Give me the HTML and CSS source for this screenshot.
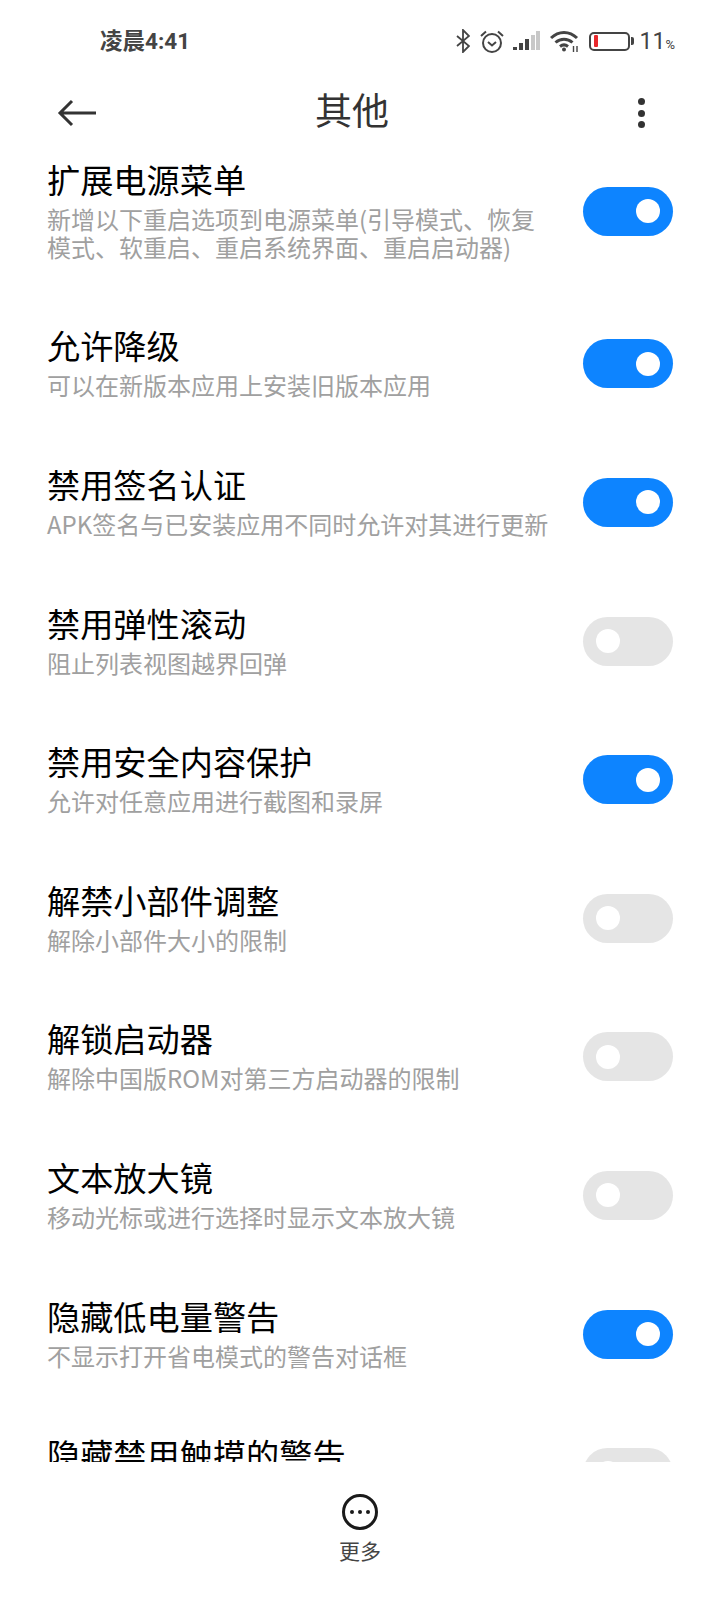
FILE: index.html
```html
<!DOCTYPE html>
<html lang="zh-CN">
<head>
    <meta charset="UTF-8">
    <title>其他</title>
    <link rel="stylesheet" href="styles.css">
</head>
<body>
    <!-- Status bar -->
    <div class="status-bar">
        <div class="status-time">凌晨4:41</div>
        <div class="status-icons">
            <svg class="icon-bt" width="14" height="24" viewBox="0 0 14 24" fill="none" stroke="#444" stroke-width="1.8">
                <path d="M1 7l12 10-6 6V1l6 6L1 17"/>
            </svg>
            <svg class="icon-alarm" width="24" height="23" viewBox="0 0 24 23" fill="none" stroke="#444" stroke-width="2">
                <circle cx="12" cy="13" r="9"/>
                <path d="M8 12l4 3.500 4-3.500"/>
                <path d="M1 6l5-4.500M23 6l-5-4.500"/>
            </svg>
            <svg class="icon-signal" width="27" height="20" viewBox="0 0 27 20">
                <rect x="0" y="16" width="4" height="3" fill="#444"/>
                <rect x="6" y="12" width="4" height="7" fill="#444"/>
                <rect x="12" y="8" width="4" height="11" fill="#444"/>
                <rect x="18" y="4" width="4" height="15" fill="#c8c8c8"/>
                <rect x="23" y="0" width="4" height="19" fill="#c8c8c8"/>
            </svg>
            <svg class="icon-wifi" width="30" height="23" viewBox="0 0 30 23" fill="none" stroke="#444" stroke-width="3">
                <path d="M1 8C8.500 .5 19.500 .5 27 8"/>
                <path d="M5.500 12.500c5-4.500 12-4.500 17 0"/>
                <path d="M10 16.500c2.500-2 5.500-2 8 0"/>
                <circle cx="14" cy="19.500" r="2" fill="#444" stroke="none"/>
                <path d="M23.500 16v6M27 16v6" stroke-width="1.400"/>
            </svg>
            <div class="battery">
                <div class="battery-body"><div class="battery-level"></div></div>
                <div class="battery-tip"></div>
            </div>
            <div class="battery-text">11<span class="battery-pct">%</span></div>
        </div>
    </div>

    <!-- Toolbar -->
    <div class="toolbar">
        <svg class="back" width="40" height="28" viewBox="0 0 40 28" fill="none" stroke="#333" stroke-width="3">
            <path d="M39 14H3M15 2L3 14l12 12"/>
        </svg>
        <div class="toolbar-title">其他</div>
        <div class="kebab"><span></span><span></span><span></span></div>
    </div>

    <!-- Settings list -->
    <div class="list">
        <div class="list-inner">
            <div class="row">
                <div class="row-text">
                    <div class="row-title">扩展电源菜单</div>
                    <div class="row-desc">新增以下重启选项到电源菜单(引导模式、恢复模式、软重启、重启系统界面、重启启动器)</div>
                </div>
                <div class="switch on"></div>
            </div>
            <div class="row">
                <div class="row-text">
                    <div class="row-title">允许降级</div>
                    <div class="row-desc">可以在新版本应用上安装旧版本应用</div>
                </div>
                <div class="switch on"></div>
            </div>
            <div class="row">
                <div class="row-text">
                    <div class="row-title">禁用签名认证</div>
                    <div class="row-desc">APK签名与已安装应用不同时允许对其进行更新</div>
                </div>
                <div class="switch on"></div>
            </div>
            <div class="row">
                <div class="row-text">
                    <div class="row-title">禁用弹性滚动</div>
                    <div class="row-desc">阻止列表视图越界回弹</div>
                </div>
                <div class="switch"></div>
            </div>
            <div class="row">
                <div class="row-text">
                    <div class="row-title">禁用安全内容保护</div>
                    <div class="row-desc">允许对任意应用进行截图和录屏</div>
                </div>
                <div class="switch on"></div>
            </div>
            <div class="row">
                <div class="row-text">
                    <div class="row-title">解禁小部件调整</div>
                    <div class="row-desc">解除小部件大小的限制</div>
                </div>
                <div class="switch"></div>
            </div>
            <div class="row">
                <div class="row-text">
                    <div class="row-title">解锁启动器</div>
                    <div class="row-desc">解除中国版ROM对第三方启动器的限制</div>
                </div>
                <div class="switch"></div>
            </div>
            <div class="row">
                <div class="row-text">
                    <div class="row-title">文本放大镜</div>
                    <div class="row-desc">移动光标或进行选择时显示文本放大镜</div>
                </div>
                <div class="switch"></div>
            </div>
            <div class="row">
                <div class="row-text">
                    <div class="row-title">隐藏低电量警告</div>
                    <div class="row-desc">不显示打开省电模式的警告对话框</div>
                </div>
                <div class="switch on"></div>
            </div>
            <div class="row">
                <div class="row-text">
                    <div class="row-title">隐藏禁用触摸的警告</div>
                </div>
                <div class="switch"></div>
            </div>
        </div>
    </div>

    <!-- Bottom action -->
    <div class="bottom-bar">
        <svg width="38" height="38" viewBox="0 0 38 38" fill="none" stroke="#1a1a1a" stroke-width="3">
            <circle cx="19" cy="19" r="16.500"/>
            <circle cx="11" cy="19" r="2" fill="#1a1a1a" stroke="none"/>
            <circle cx="19" cy="19" r="2" fill="#1a1a1a" stroke="none"/>
            <circle cx="27" cy="19" r="2" fill="#1a1a1a" stroke="none"/>
        </svg>
        <div class="bottom-label">更多</div>
    </div>
</body>
</html>
```

FILE: styles.css
```css
html, body {
    margin: 0;
    padding: 0;
    height: 100%;
    overflow: hidden;
    background: #fff;
    font-family: "Noto Sans CJK SC", "Noto Sans", sans-serif;
}

body {
    display: flex;
    flex-direction: column;
}

.status-bar {
    height: 80px;
    flex: none;
    display: flex;
    align-items: center;
    justify-content: space-between;
    padding: 0 45px 2px 100px;
    box-sizing: border-box;
    color: #444;
}

.status-time {
    font-family: Roboto, "Noto Sans CJK SC", sans-serif;
    font-size: 22.500px;
    font-weight: 700;
}

.status-icons {
    display: flex;
    align-items: center;
    padding-top: 4px;
}

.icon-bt {
    margin-right: 10px;
}

.icon-alarm {
    margin-right: 9px;
}

.icon-signal {
    margin-right: 10px;
}

.icon-wifi {
    margin-right: 9px;
}

.battery {
    display: flex;
    align-items: center;
    margin-right: 6px;
}

.battery-body {
    width: 34px;
    height: 12px;
    border: 2.500px solid #444;
    border-radius: 5px;
    padding: 1.500px 0 1.500px 3px;
    display: flex;
}

.battery-level {
    width: 4px;
    background: #e8282c;
    border-radius: 1px;
}

.battery-tip {
    width: 3px;
    height: 8px;
    margin-left: 1px;
    background: #444;
    border-radius: 0 2px 2px 0;
}

.battery-text {
    font-family: Roboto, sans-serif;
    font-size: 23px;
    color: #444;
}

.battery-pct {
    font-size: 13px;
}

.toolbar {
    height: 74px;
    flex: none;
    position: relative;
    display: flex;
    align-items: center;
    justify-content: space-between;
    padding: 0 75px 8px 57px;
    box-sizing: border-box;
}

.toolbar-title {
    font-size: 37px;
    color: #333;
    position: absolute;
    left: 0;
    right: 16px;
    top: 0;
    text-align: center;
    line-height: 58px;
}

.kebab {
    display: flex;
    flex-direction: column;
    gap: 4.500px;
}

.kebab span {
    width: 7px;
    height: 7px;
    border-radius: 50%;
    background: #333;
}

.list {
    flex: 1;
    overflow: hidden;
}

/* list is scrolled a little, first row sits under the toolbar */
.list-inner {
    margin-top: -26px;
}

.row {
    display: flex;
    align-items: center;
    justify-content: space-between;
    padding: 31.800px 47px;
}

.row-text {
    width: 506px;
    min-height: 73px;
    padding-bottom: 2px;
}

.row-title {
    font-size: 33.200px;
    line-height: 38px;
    color: #000;
}

.row-desc {
    font-size: 24px;
    line-height: 28px;
    margin-top: 7px;
    color: #a0a0a0;
}

.switch {
    width: 90px;
    height: 49px;
    flex: none;
    border-radius: 25px;
    background: #e5e5e5;
    display: flex;
    align-items: center;
    padding: 0 13px;
    box-sizing: border-box;
}

.switch::after {
    content: "";
    width: 24px;
    height: 24px;
    border-radius: 50%;
    background: #fff;
}

.switch.on {
    background: #0d84ff;
    justify-content: flex-end;
}

.bottom-bar {
    height: 138px;
    flex: none;
    display: flex;
    flex-direction: column;
    align-items: center;
    padding-top: 31px;
    box-sizing: border-box;
}

.bottom-label {
    font-size: 21px;
    line-height: 28px;
    margin-top: 5px;
    color: #444;
}
```
